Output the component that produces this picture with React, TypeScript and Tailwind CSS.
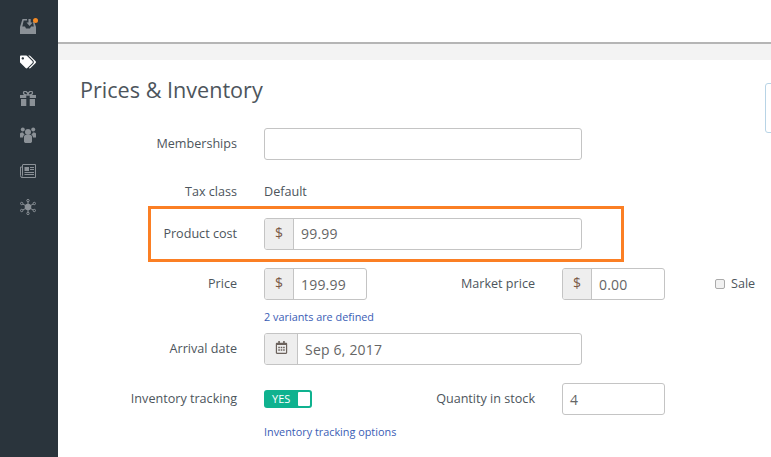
import { FaRegCalendarAlt, FaTags } from 'react-icons/fa';

const font = { fontFamily: '"Open Sans", sans-serif' };

const InboxIcon = () => (
  <svg width="16" height="15" viewBox="0 0 16 15" fill="currentColor">
    <path d="M2.500 0H7v1.600H3.700L2.300 7.500H5L6 9.500h4l1-2h2.800L13 3h1.300L16 8v7H0V8z" />
    <path d="M8.500 0h2.200v3.500h2L9.600 7 6.500 3.500h2z" />
  </svg>
);

const GiftIcon = () => (
  <svg width="16" height="15" viewBox="0 0 16 15" fill="currentColor">
    <path d="M0 4h6.300v3H0zM9.700 4H16v3H9.700zM1 8h5.300v7H1zM9.700 8H15v7H9.700z" />
    <path d="M8 4C6 4 3.500 3.700 3.500 2S5 0 6 .5C7 1 8 3 8 4zM8 4c2 0 4.500-.3 4.500-2S11 0 10 .5C9 1 8 3 8 4z" fill="none" stroke="currentColor" strokeWidth="1.300" />
  </svg>
);

const UsersIcon = () => (
  <svg width="16" height="16" viewBox="0 0 16 16" fill="currentColor">
    <circle cx="8" cy="5" r="3" />
    <circle cx="2.800" cy="2.600" r="2" />
    <circle cx="13.200" cy="2.600" r="2" />
    <path d="M0 6.500C.5 5.500 1.500 5.200 3 5.500c.5 1 1 1.500 1.700 2C3.700 8 3.200 9 3 10.500H0zM16 6.500c-.5-1-1.500-1.300-3-1 -.5 1-1 1.500-1.700 2 1 .5 1.500 1.500 1.700 3H16z" />
    <path d="M4 9.500C4 8.500 5 8 6 8h4c1 0 2 .5 2 1.500V14.500c0 .8-.8 1.500-2 1.500H6c-1.200 0-2-.7-2-1.500z" />
  </svg>
);

const NewsIcon = () => (
  <svg width="16" height="14" viewBox="0 0 16 14" fill="none" stroke="currentColor">
    <path d="M2.500 1v10.500c0 .8-.5 1.500-1.250 1.500S.5 12.500.5 11.500V3h2M2.500 .5h13v13H1.200" strokeWidth="1" />
    <path d="M4.500 3h4.500v4H4.500z" fill="currentColor" stroke="none" />
    <path d="M10 3.500h4M10 5.500h4M4.500 8.500h9.500M4.500 10.500h9.500" strokeWidth="1" />
  </svg>
);

const HubIcon = () => (
  <svg width="16" height="16" viewBox="0 0 16 16" fill="currentColor" stroke="currentColor">
    <circle cx="8" cy="8" r="3.300" stroke="none" />
    <path d="M8 2v12M2 4.500l12 7M14 4.500l-12 7" strokeWidth="1" fill="none" />
    <circle cx="8" cy="1.600" r="1.200" fill="#2a343c" strokeWidth="1" />
    <circle cx="8" cy="14.400" r="1.200" fill="#2a343c" strokeWidth="1" />
    <circle cx="1.700" cy="4.500" r="1.200" fill="#2a343c" strokeWidth="1" />
    <circle cx="14.300" cy="4.500" r="1.200" fill="#2a343c" strokeWidth="1" />
    <circle cx="1.700" cy="11.500" r="1.200" fill="#2a343c" strokeWidth="1" />
    <circle cx="14.300" cy="11.500" r="1.200" fill="#2a343c" strokeWidth="1" />
  </svg>
);

const Sidebar = () => (
  <aside className="w-[58px] shrink-0 bg-[#2a343c] flex flex-col items-center pt-[8px] pr-[2px] text-[#8b9197]">
    <div className="h-[36px] flex items-center">
      <div className="relative w-[16px] h-[15px]">
        <InboxIcon />
        <span className="absolute -top-[1px] -right-[2px] w-[5px] h-[5px] rounded-full bg-[#f58a24]" />
      </div>
    </div>
    <div className="h-[36px] flex items-center">
      <FaTags className="text-white text-[16px]" />
    </div>
    <div className="h-[37px] flex items-center">
      <GiftIcon />
    </div>
    <div className="h-[35px] flex items-center">
      <UsersIcon />
    </div>
    <div className="h-[37px] flex items-center">
      <NewsIcon />
    </div>
    <div className="h-[36px] flex items-center">
      <HubIcon />
    </div>
  </aside>
);

const Label = ({ text, width = 'w-[157px]' }: { text: string; width?: string }) => (
  <div className={`${width} shrink-0 text-right text-[12.6px] leading-none pt-[1px] text-[#4d555c]`}>{text}</div>
);

const Addon = ({ children, width = 'w-[29px]' }: { children: React.ReactNode; width?: string }) => (
  <div className={`${width} shrink-0 self-stretch flex items-center justify-center bg-[#eeeeee] border-r border-[#c4c4c4] text-[#7a5a48] text-[14px] pb-[3px]`}>
    {children}
  </div>
);

const InputBox = ({
  value,
  addon,
  width,
  calendar,
}: {
  value?: string;
  addon?: boolean;
  width: string;
  calendar?: boolean;
}) => (
  <div className={`${width} h-[32px] flex items-center border border-[#c4c4c4] rounded-[3px] bg-white overflow-hidden text-[14px] text-[#666]`}>
    {addon && <Addon>$</Addon>}
    {calendar && (
      <Addon width="w-[33px]">
        <FaRegCalendarAlt className="text-[13px] text-[#6b625c]" />
      </Addon>
    )}
    {value && <span className={addon || calendar ? 'pl-[7px] tracking-[0.2px]' : 'pl-[7px]'}>{value}</span>}
  </div>
);

const Row = ({ className, children }: { className: string; children: React.ReactNode }) => (
  <div className={`flex items-center ${className}`}>{children}</div>
);

const App = () => {
  return (
    <div className="relative flex w-[771px] h-[457px] overflow-hidden bg-white" style={font}>
      <Sidebar />
      <main className="flex-1 min-w-0">
        <div className="h-[42px] bg-white" />
        <div className="h-[2px] bg-[#b5b5b5]" />
        <div className="h-[16px] bg-[#f3f3f3]" />
        <div className="pl-[22px]">
          <h1 className="text-[21.6px] leading-[30px] mt-[15px] text-[#4d555c] font-normal">Prices &amp; Inventory</h1>

          <Row className="mt-[23px] h-[31px]">
            <Label text="Memberships" />
            <div className="ml-[27px]">
              <InputBox width="w-[318px]" />
            </div>
          </Row>

          <Row className="mt-[24px] h-[18px]">
            <Label text="Tax class" />
            <div className="ml-[27px] text-[12.6px] text-[#4d555c] pt-[1px]">Default</div>
          </Row>

          <div className="ml-[68px] mt-[5px] w-[476px] h-[56px] border-[3px] border-[#fb7f24] flex items-center">
            <div className="w-[86px] shrink-0 text-right text-[12.6px] leading-none mt-[1px] text-[#4d555c]">Product cost</div>
            <div className="ml-[27px] mb-[1px]">
              <InputBox width="w-[318px]" addon value="99.99" />
            </div>
          </div>

          <Row className="mt-[6px] h-[32px]">
            <Label text="Price" />
            <div className="ml-[27px]">
              <InputBox width="w-[103px]" addon value="199.99" />
            </div>
            <Label text="Market price" width="w-[168px]" />
            <div className="ml-[27px]">
              <InputBox width="w-[103px]" addon value="0.00" />
            </div>
            <div className="ml-[50px] flex items-center gap-[6px] text-[12.6px] text-[#4d555c]">
              <span className="w-[10px] h-[10px] border border-[#aaa] rounded-[2px] bg-[#f1f1f1]" />
              Sale
            </div>
          </Row>

          <div className="ml-[184px] mt-[10px] h-[14px] text-[10.85px] leading-[14px] text-[#3a5db5]">2 variants are defined</div>

          <Row className="mt-[9px] h-[32px]">
            <Label text="Arrival date" />
            <div className="ml-[27px]">
              <InputBox width="w-[318px]" calendar value="Sep 6, 2017" />
            </div>
          </Row>

          <Row className="mt-[18px] h-[32px]">
            <Label text="Inventory tracking" />
            <div className="ml-[27px] w-[48px] h-[18px] rounded-[3px] bg-[#0fb28f] flex items-center justify-between pl-[8px] pr-[2px]">
              <span className="text-[11px] leading-none text-white pb-[1px]">YES</span>
              <span className="w-[12px] h-[14px] bg-white rounded-[1px]" />
            </div>
            <Label text="Quantity in stock" width="w-[223px]" />
            <div className="ml-[27px]">
              <InputBox width="w-[103px]" value="4" />
            </div>
          </Row>

          <div className="ml-[184px] mt-[10px] text-[10.85px] leading-[14px] text-[#3a5db5]">Inventory tracking options</div>
        </div>
      </main>
      <div className="absolute left-[765px] top-[83px] w-[12px] h-[50px] border border-[#b8d4e6] rounded-[3px]" />
    </div>
  );
};

export default App;
